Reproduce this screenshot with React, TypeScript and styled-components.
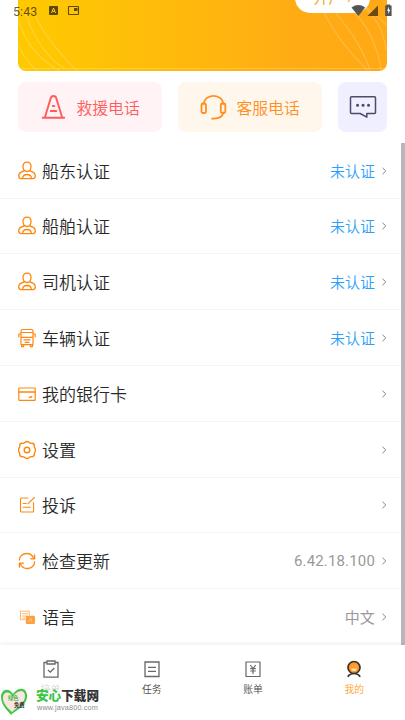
import React from 'react';
import styled, { createGlobalStyle } from 'styled-components';

const Global = createGlobalStyle`
  * { box-sizing: border-box; }
  body { margin: 0; background: #fff; font-family: Roboto, "Noto Sans CJK SC", sans-serif; }
`;
const Svg = styled.svg.attrs<React.SVGProps<SVGSVGElement>>(p => ({
  fill: 'none',
  stroke: p.stroke ?? 'currentColor',
}))`
  display: block; flex-shrink: 0;
`;
const Screen = styled.div`
  position: relative; width: 405px; height: 720px; overflow: hidden;
  background: #fff; display: flex; flex-direction: column;
`;
const StatusBar = styled.div`
  position: absolute; inset: 0 0 auto 0; height: 22px; padding: 0 12px 0 13px;
  display: flex; align-items: center; color: rgba(30, 25, 10, 0.72);
  font-size: 12.4px; z-index: 2;
`;
const Clock = styled.span`width: 36px; letter-spacing: 0.1px;`;
const StatusRight = styled.div`position: absolute; left: 350px; top: 3px;`;
const Hero = styled.header`
  position: relative; height: 71px; margin: 0 18px; overflow: hidden; flex: none;
  border-radius: 0 0 8px 8px; background: linear-gradient(90deg, #ffc900 0%, #ffc107 25%, #ffac14 75%, #ffa915 100%);
`;
const HeroPill = styled.div`
  position: absolute; left: 277px; top: -19px; width: 75px; height: 32px; border-radius: 15px;
  background: #fff; color: #f6a623; font-size: 15px; line-height: 34px; text-align: center; overflow: hidden;
`;
const Actions = styled.section`
  display: flex; gap: 16px; padding: 11px 18px 0; height: 71.8px; flex: none;
`;
const Action = styled.button<{ $bg: string; $fg: string; $square?: boolean }>`
  width: ${p => (p.$square ? 49 : 144)}px; height: 50px; border: 0; padding: 0; border-radius: 8px;
  display: flex; align-items: center; justify-content: ${p => (p.$square ? 'center' : 'flex-start')};
  padding-left: ${p => (p.$square ? 0 : 22)}px; gap: 9.5px; background: ${p => p.$bg}; color: ${p => p.$fg};
  font: 350 15.8px "Noto Sans CJK SC", sans-serif;
`;
const List = styled.main`height: 502.2px; flex: none;`;
const Row = styled.div`
  height: 55.8px; padding: 1px 17px 0 18px; display: flex; align-items: center;
  border-bottom: 1px solid #f5f5f5; color: #ff8710;
  &:last-child { border-bottom: 0; padding-top: 0; }
`;
const Label = styled.span`
  margin: -1px 0 0 6px; flex: 1; color: #282828; font: 350 17px "Noto Sans CJK SC", sans-serif;
`;
const Value = styled.span<{ $link?: boolean }>`
  margin: -1px 5px 0 0;
  color: ${p => (p.$link ? '#2c9ffa' : '#999')}; font-size: 15px; font-weight: ${p => (p.$link ? 350 : 400)};
  letter-spacing: ${p => (p.$link ? 0 : 0.16)}px;
`;
const Chevron = styled.span`color: #858585;`;
const Scrollbar = styled.div`
  position: absolute; left: 401px; top: 143px; width: 4px; height: 502px; background: #b7b7b7;
`;
const Tabs = styled.nav`
  position: relative; flex: 1; display: grid; grid-template-columns: repeat(4, 1fr); background: #fff;
  box-shadow: 0 -1px 5px rgba(0, 0, 0, 0.08);
`;
const Tab = styled.div<{ $active?: boolean; $faded?: boolean }>`
  display: flex; flex-direction: column; align-items: center; padding-top: 14px; color: #686868;
  span { margin-top: 3px; font: 350 9.8px/14px "Noto Sans CJK SC", sans-serif;
    color: ${p => (p.$active ? '#ff9f20' : p.$faded ? '#d6d6d6' : '#484848')}; }
`;
const Watermark = styled.div`
  position: absolute; left: 0; top: 686px; display: flex; gap: 7px; z-index: 3;
`;
const Mark = styled.div`position: relative; width: 29px; height: 31px;`;
const MarkText = styled.span<{ $dark?: boolean }>`
  position: absolute; white-space: nowrap; left: ${p => (p.$dark ? 14 : 8)}px; top: ${p => (p.$dark ? 16 : 9)}px;
  font: bold 5.3px/7px "Noto Sans CJK SC", sans-serif; color: ${p => (p.$dark ? '#333' : '#35bd3f')};
`;
const SiteName = styled.div`
  font: 900 12.6px/14px "Noto Sans CJK SC", sans-serif; color: #343434; margin-top: 2px;
  b { color: #3bc545; font-weight: 900; }
`;
const SiteUrl = styled.div`
  font: 7.3px/8px "Liberation Sans", sans-serif; color: #8e8e8e; letter-spacing: 0.15px; margin: 2px 0 0 1px;
`;

const I = ({ children, w = 1.2 }: { children: React.ReactNode; w?: number }) => (
  <Svg width="18" height="20" viewBox="0 0 18 20" strokeWidth={w} strokeLinejoin="round" strokeLinecap="round">{children}</Svg>
);
const Person = () => (
  <I w={1.3}>
    <path d="M9 1.200C6.300 1.200 4.900 3 5 5.500 5.100 8 6.400 10.500 9 10.500s3.900-2.500 4-5c.1-2.500-1.300-4.300-4-4.300z" />
    <path d="M6 10C3.400 10.700.8 12 .7 14.500c0 2 .8 3.200 2.500 3.200h11.600c1.700 0 2.500-1.200 2.500-3.200-.1-2.500-2.700-3.800-5.300-4.500" />
    <path d="M4.500 17.300c.4-2.600 2-3.800 4.500-3.800s4.100 1.200 4.500 3.800" />
  </I>
);
const Bus = () => (
  <I w={1.2}>
    <path d="M3 16.700V3Q3 1.500 4.500 1.500h9Q15 1.500 15 3v13.700zM3 4.500h12M3 9.300h12M3 6H.8v3M15 6h2.200v3M6 11.900h6M7 14.300h4M3.600 16.900v1.800h2v-1.800M12.400 16.900v1.800h2v-1.800" />
  </I>
);
const Card = () => (
  <I><rect x=".8" y="4" width="16.400" height="12.400" rx=".6" /><path d="M1 8h16M11.300 13.400l2.500-.7" strokeWidth="1.500" /></I>
);
const Gear = () => (
  <I w={1.4}>
    <path d="M7 2.300Q9 .5 11 2.300q1.300 1.400 3 1 2.300.2 2.300 2.200-.2 1.500.6 2.400 1.100 2.100 0 4.200-.8.900-.6 2.400 0 2-2.300 2.200-1.700-.4-3 1Q9 19.500 7 17.700q-1.300-1.400-3-1-2.300-.2-2.300-2.200.2-1.500-.6-2.400-1.100-2.100 0-4.200.8-.9.6-2.400 0-2 2.300-2.200 1.700.4 3-1z" />
    <circle cx="9" cy="10" r="2.800" />
  </I>
);
const Edit = () => (
  <I w={1.1}><path d="M10 3H3.600Q2.500 3 2.500 4v12q0 1 1.100 1h11q1 0 1-1V7.500M5.200 8.500h3M5.200 12.200h7.200M10 8.700l6.500-6.200" /></I>
);
const Refresh = () => (
  <I w={1.3}><path d="M1.300 9C1.500 5 5 2.500 8.700 2.500c3.300 0 5.700 1.700 7 4.800M16.600 3.800v4h-4M16.700 11c-.2 4-3.700 6.500-7.400 6.500-3.300 0-5.700-1.700-7-4.800M1.400 16.200v-4h4" /></I>
);
const Language = () => (
  <I w={0.9}>
    <path d="M11.300 8V4.200H2.500v8.500H7M4.500 6.700h5M4.500 9h4M5 11h2" opacity=".65" />
    <rect x="7.800" y="8.700" width="9.200" height="8.300" rx="1.200" fill="#ff9f3d" stroke="none" />
    <path d="M11 14.700l1.500-3.500 1.500 3.500" stroke="#ffd1a0" strokeWidth=".7" />
  </I>
);

const rows = [
  { icon: <Person />, label: '船东认证', value: '未认证', link: true },
  { icon: <Person />, label: '船舶认证', value: '未认证', link: true },
  { icon: <Person />, label: '司机认证', value: '未认证', link: true },
  { icon: <Bus />, label: '车辆认证', value: '未认证', link: true },
  { icon: <Card />, label: '我的银行卡' },
  { icon: <Gear />, label: '设置' },
  { icon: <Edit />, label: '投诉' },
  { icon: <Refresh />, label: '检查更新', value: '6.42.18.100' },
  { icon: <Language />, label: '语言', value: '中文' },
];

export default function App() {
  return (
    <Screen>
      <Global />
      <StatusBar>
        <Clock>5:43</Clock>
        <Svg width="32" height="12" viewBox="0 0 32 12">
          <rect x="0" y="1" width="9" height="9" rx="1" fill="currentColor" stroke="none" />
          <path d="M2.500 8l2-5 2 5M3.300 6.300h2.400" stroke="#ffcc20" />
          <rect x="19.500" y="1.500" width="10" height="8" rx=".5" strokeWidth="1.100" />
          <path d="M25 3h3.500v3H25z" fill="currentColor" stroke="none" />
        </Svg>
        <StatusRight>
          <Svg width="44" height="14" viewBox="0 0 44 14" stroke="none">
            <path d="M1.500 4.500Q8.300-.3 15.200 4.500L8.400 13z" fill="#555" />
            <path d="M28 2.500V13H17.500z" fill="#694b12" />
            <path d="M36.700 1.500v1h-1.500V13h6.400V2.500h-1.500v-1z" fill="#535353" />
            <path d="M39 3.700l-2 4h1.300V11l2-4.300H39z" fill="#fff" />
          </Svg>
        </StatusRight>
      </StatusBar>
      <Hero>
        <Svg width="369" height="71" viewBox="0 0 369 71" stroke="#fff" strokeOpacity=".2" strokeWidth="1.200">
          <path d="M1 20C7 45 22 60 42 71M0 43q5 16 20 28M7 13C17 40 29 58 46 68M17 15c8 18 25 39 42 56M0 68.500h369" />
          <path d="M306 13c12 24 28 42 43 57M318 13c12 15 26 33 34 57M334 10c15 14 26 37 29 60M346 7c14 12 20 27 22 43M340 0l29 25" />
        </Svg>
        <HeroPill>开户 ›</HeroPill>
      </Hero>
      <Actions>
        <Action $bg="#fff3f5" $fg="#ff5c5c">
          <Svg width="27" height="26" viewBox="0 0 27 26" strokeWidth="1.900" strokeLinecap="round" strokeLinejoin="round">
            <path d="M2.700 23.700h21.500M5 23l5.600-18.400q.5-2.600 2.900-2.600t2.900 2.600L22 23M12.800 12h1.400M10.700 17h5.600" />
          </Svg>
          救援电话
        </Action>
        <Action $bg="#fff6ec" $fg="#ff8f1f">
          <Svg width="27" height="26" viewBox="0 0 27 26" strokeWidth="1.800" strokeLinecap="round" strokeLinejoin="round">
            <path d="M3.500 10C4 5.300 8 1.800 13.500 1.800S23 5.300 23.500 10M23.500 18.500c-1 4-4.500 6-9.500 6.200h-2" />
            <rect x="1.500" y="9.500" width="4.500" height="9.500" rx="1.500" /><rect x="20.800" y="9.500" width="4.500" height="9.500" rx="1.500" />
          </Svg>
          客服电话
        </Action>
        <Action $bg="#efefff" $fg="#4e4a67" $square>
          <Svg width="28" height="26" viewBox="0 0 28 26" strokeWidth="1.500" strokeLinejoin="round">
            <path d="M2.500 2.700h23q1 0 1 1v14.800q0 1-1 1h-7.700v3.700l-6.600-3.700H2.500q-1 0-1-1V3.700q0-1 1-1z" />
            <path d="M8.500 11.200h.1M14 11.200h.1M19.500 11.200h.1" strokeWidth="3" strokeLinecap="round" />
          </Svg>
        </Action>
      </Actions>
      <List>
        {rows.map(r => (
          <Row key={r.label}>
            {r.icon}<Label>{r.label}</Label>
            {r.value && <Value $link={r.link}>{r.value}</Value>}
            <Chevron><Svg width="8" height="10" viewBox="0 0 8 10"><path d="M2.500 1.800L5.800 5 2.500 8.200" /></Svg></Chevron>
          </Row>
        ))}
      </List>
      <Scrollbar />
      <Tabs>
        <Tab $faded>
          <Svg width="18" height="20" viewBox="0 0 18 20" strokeWidth="1.300"><path d="M5 3.500H2v14.700h14V3.500h-3M5 2h8v3H5zM6 11l2.300 2.200 4-4.200" /></Svg>
          <span>接单</span>
        </Tab>
        <Tab>
          <Svg width="18" height="20" viewBox="0 0 18 20" strokeWidth="1.300"><path d="M2 3h14v14.500H2zM5 8.300h8M5 12.300h8" /></Svg>
          <span>任务</span>
        </Tab>
        <Tab>
          <Svg width="18" height="20" viewBox="0 0 18 20" strokeWidth="1.200"><path d="M2 3h14v14.500H2zM6.300 6L9 9.500 11.700 6M6.200 9.700h5.600M6.200 12h5.600M9 9.500V15" /></Svg>
          <span>账单</span>
        </Tab>
        <Tab $active>
          <Svg width="18" height="20" viewBox="0 0 18 20" strokeWidth="1.700" stroke="#35322e">
            <circle cx="9" cy="8.500" r="6" fill="#ff9826" /><path d="M2.800 17.800q2-3.300 6.200-3.300t6.200 3.300" />
            <path d="M6 9.500h6q-.5 2.500-3 2.500t-3-2.500z" fill="#ffe3bd" stroke="none" /><path d="M7 7h.8M10.500 7h.8" stroke="#ffe3bd" strokeWidth=".8" />
          </Svg>
          <span>我的</span>
        </Tab>
      </Tabs>
      <Watermark>
        <Mark>
          <Svg width="29" height="31" viewBox="0 0 29 31" stroke="none">
            <path d="M13 8C9 1 1 3 1 11c0 8 6 13 10 18 2-3 17-9 16-20C26 1 18 1 13 8z" fill="#43c64b" />
            <path d="M13 11C9 4 3 6 3 12c0 6 5 10 9 14 4-4 14-9 13-17-1-6-8-5-12 2z" fill="#fbe5df" />
          </Svg>
          <MarkText>绿色</MarkText><MarkText $dark>免费</MarkText>
        </Mark>
        <div><SiteName><b>安心</b>下载网</SiteName><SiteUrl>www.java800.com</SiteUrl></div>
      </Watermark>
    </Screen>
  );
}
